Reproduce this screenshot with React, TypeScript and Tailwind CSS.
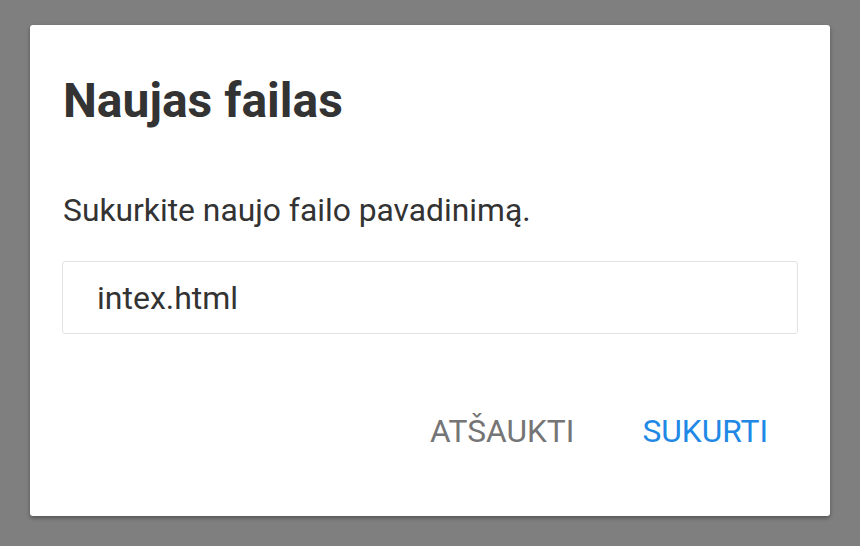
import React from "react";

export default function App() {
  return (
    <div
      className="w-[860px] h-[546px] bg-[#7f7f7f] pt-[25px] pl-[30px] overflow-hidden"
      style={{ fontFamily: "Roboto, 'Liberation Sans', sans-serif" }}
    >
      <div className="w-[800px] h-[491px] bg-white rounded-[3px] shadow-[0_2px_4px_rgba(0,0,0,0.35)] flex flex-col px-[32px] pt-[48px]">
        <h1 className="text-[48px] leading-[56px] font-bold text-[#333333] ml-px">
          Naujas failas
        </h1>
        <p className="mt-[61px] text-[31.8px] leading-[40px] text-[#333333] ml-px">
          Sukurkite naujo failo pavadinimą.
        </p>
        <input
          className="mt-[31px] h-[73px] w-full border-[1.5px] border-[#e2e2e2] rounded-[3px] pl-[34px] text-[32px] text-[#333333] outline-none"
          defaultValue="intex.html"
        />
        <div className="mt-[78px] flex justify-end gap-[68px] pr-[30px]">
          <button className="text-[31.7px] leading-[40px] text-[#757575]">
            ATŠAUKTI
          </button>
          <button className="text-[31.7px] leading-[40px] text-[#2188e5]">
            SUKURTI
          </button>
        </div>
      </div>
    </div>
  );
}
